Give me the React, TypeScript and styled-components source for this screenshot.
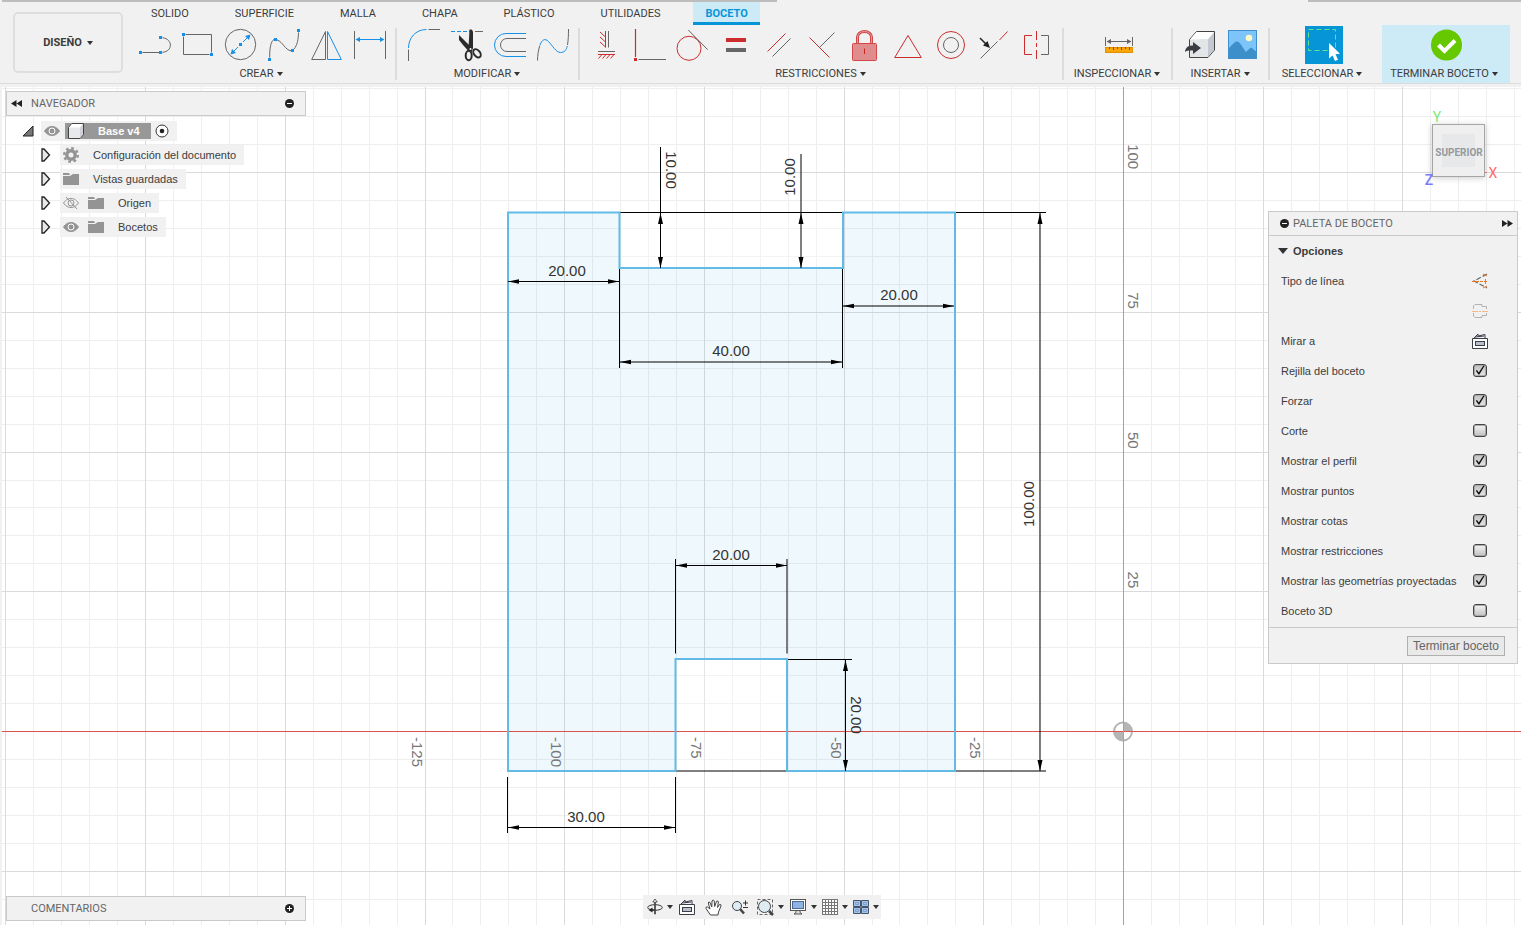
import React from "react";
import styled, { createGlobalStyle } from "styled-components";

const BLUE = "#168fe6";
const GRAY = "#666";
const RED = "#cc2c2c";
const INK = "#3c3c3c";
const PANEL = "#f1f1f1";
const LINE = "#cacaca";

const GlobalStyle = createGlobalStyle`
  *, *::before, *::after { box-sizing: border-box; }
  body {
    margin: 0;
    background: #fff;
    color: ${INK};
    font-family: "Liberation Sans", Arial, sans-serif;
    font-size: 11px;
  }
  button { font: inherit; color: inherit; margin: 0; padding: 0; border: 0; background: none; cursor: pointer; }
  svg { display: block; flex: none; }
`;

/* ---------- page ---------- */

const Page = styled.div`
  display: flex;
  flex-direction: column;
  min-height: 100vh;
`;

const Header = styled.header`
  background: ${PANEL};
  border-bottom: 1px solid #dcdcdc;
  font-family: Roboto, "Liberation Sans", sans-serif;
`;

const TopEdge = styled.div`
  display: flex;
  justify-content: space-between;
  height: 2px;
  padding-left: 2px;
`;

const EdgeBar = styled.div<{ $share: number }>`
  width: ${(p) => p.$share}%;
  background: #bdbdbd;
`;

const HeaderBody = styled.div`
  display: flex;
  align-items: flex-start;
  gap: 5px;
  padding: 0 11px 0 13px;
`;

const WorkspaceButton = styled.button`
  display: flex;
  flex: none;
  align-items: center;
  justify-content: center;
  gap: 5px;
  width: 110px;
  height: 61px;
  margin-top: 10px;
  border: 2px solid #dedede;
  border-radius: 5px;
  font-weight: 700;
`;

const Ribbon = styled.div`
  flex: 1;
  min-width: 0;
`;

const Tabs = styled.nav`
  display: flex;
  height: 23px;
`;

const Tab = styled.button<{ $active?: boolean }>`
  height: 23px;
  padding: 4px ${(p) => (p.$active ? 12 : 23)}px 0;
  margin-left: ${(p) => (p.$active ? 10 : 0)}px;
  border-bottom: 3px solid ${(p) => (p.$active ? "#0696d7" : "transparent")};
  background: ${(p) => (p.$active ? "#cdeaf7" : "none")};
  color: ${(p) => (p.$active ? "#0696d7" : INK)};
  font-weight: ${(p) => (p.$active ? 700 : 400)};
  line-height: 16px;
`;

const Groups = styled.div`
  display: flex;
  height: 58px;
`;

const Group = styled.section<{ $width?: number }>`
  display: flex;
  flex-direction: column;
  align-items: center;
  flex: none;
  min-width: ${(p) => p.$width ?? 0}px;
  padding: 0 3px 0 6px;
`;

const Separator = styled.div`
  flex: none;
  width: 2px;
  height: 52px;
  margin-top: 3px;
  background: #dcdcdc;
`;

const Tools = styled.div`
  display: flex;
  height: 40px;
`;

const ToolButton = styled.button`
  width: 43px;
  height: 40px;
`;

const GroupLabel = styled.button`
  display: flex;
  align-items: center;
  gap: 3px;
  height: 18px;
  padding-right: 4px;
  line-height: 18px;
  white-space: nowrap;
`;

const FinishGroup = styled.section`
  display: flex;
  flex-direction: column;
  align-items: center;
  flex: none;
  width: 128px;
  margin-left: 7px;
  background: #cdeaf7;
`;

const Caret = styled.span`
  width: 0;
  height: 0;
  border: 3px solid transparent;
  border-top: 4px solid #333;
  border-bottom: 0;
`;

/* ---------- workspace ---------- */

const Workspace = styled.main`
  position: relative;
  display: flex;
  flex: 1;
  flex-direction: column;
  border-top: 3px solid ${PANEL};
  border-left: 2px solid ${PANEL};
`;

const SketchCanvas = styled.svg`
  position: absolute;
  inset: 0;
  width: 100%;
  height: 100%;
`;

const Overlay = styled.div`
  position: relative;
  display: flex;
  flex: 1;
  flex-direction: column;
  justify-content: space-between;
  padding: 4px 3px 4px 4px;
`;

const UpperRow = styled.div`
  display: flex;
  align-items: flex-start;
  justify-content: space-between;
`;

const LowerRow = styled.div`
  display: grid;
  grid-template-columns: 1fr auto 1fr;
  align-items: end;
`;

const PanelBar = styled.div`
  display: flex;
  align-items: center;
  width: 300px;
  height: 25px;
  padding: 0 11px 0 4px;
  border: 1px solid ${LINE};
  background: ${PANEL};
  color: #666;
  font-family: Roboto, "Liberation Sans", sans-serif;
`;

const BarTitle = styled.h2`
  flex: 1;
  margin: 0;
  font-size: 11px;
  font-weight: 400;
`;

const BarIcon = styled.button`
  display: flex;
  align-items: center;
`;

const BarSlot = styled.div`
  flex: none;
  width: 20px;
`;

const Tree = styled.ul`
  display: flex;
  flex-direction: column;
  gap: 4px;
  margin: 5px 0 0;
  padding: 0 0 0 16px;
  list-style: none;
`;

const TreeItem = styled.li<{ $nested?: boolean }>`
  display: flex;
  align-items: center;
  height: 20px;
  padding-left: ${(p) => (p.$nested ? 19 : 0)}px;
`;

const Twisty = styled.button`
  display: flex;
  align-items: center;
  width: 19px;
  height: 20px;
`;

const NodeChip = styled.div`
  display: flex;
  align-items: center;
  height: 20px;
  padding: 0 8px 0 3px;
  background: ${PANEL};
`;

const NodeIcon = styled.span`
  width: 25px;
`;

const NodeText = styled.span`
  padding-left: 5px;
`;

const RootName = styled.span`
  display: flex;
  align-items: center;
  gap: 14px;
  height: 16px;
  margin-right: 4px;
  padding: 0 11px 0 3px;
  background: #989898;
  color: #fff;
  font-weight: 700;
`;

const RightColumn = styled.div`
  display: flex;
  flex-direction: column;
  align-items: flex-end;
  width: 250px;
`;

const ViewCube = styled.svg`
  width: 88px;
  height: 90px;
  margin: 15px 14px 15px 0;
`;

/* ---------- sketch palette ---------- */

const Palette = styled.aside`
  width: 250px;
  border: 1px solid ${LINE};
  background: ${PANEL};
`;

const PaletteHeader = styled.div`
  display: flex;
  align-items: center;
  gap: 4px;
  height: 24px;
  padding: 0 4px 0 11px;
  border-bottom: 1px solid ${LINE};
  color: #666;
  font-family: Roboto, "Liberation Sans", sans-serif;
`;

const SectionTitle = styled.button`
  display: flex;
  align-items: center;
  gap: 5px;
  height: 30px;
  padding-left: 9px;
  font-weight: 700;
`;

const BigCaret = styled.span`
  width: 0;
  height: 0;
  border: 5px solid transparent;
  border-top: 6px solid #333;
  border-bottom: 0;
`;

const Options = styled.div`
  padding-bottom: 1px;
`;

const OptionRow = styled.div`
  display: flex;
  align-items: center;
  justify-content: space-between;
  height: 30px;
  padding: 0 29px 0 12px;
`;

const Check = styled.input`
  display: grid;
  place-items: center;
  appearance: none;
  width: 14px;
  height: 13px;
  margin: 0 1px 2px 0;
  border: 1px solid #444;
  border-radius: 3px;
  background: linear-gradient(#f4f4f4, #c2c2c2);
  box-shadow: inset 0 0 0 1px #aaa;

  &:checked { background: linear-gradient(#c0c0c0, #e6e6e6); }

  &:checked::before {
    content: "";
    width: 10px;
    height: 10px;
    background: #111;
    clip-path: polygon(8% 58%, 20% 50%, 38% 76%, 84% 4%, 96% 8%, 44% 96%, 34% 96%);
  }
`;

const PaletteFooter = styled.div`
  display: flex;
  justify-content: flex-end;
  height: 36px;
  padding: 8px 12px 0 0;
  border-top: 1px solid ${LINE};
`;

const FooterButton = styled.button`
  height: 20px;
  padding: 0 5px;
  border: 1px solid #b0b0b0;
  background: #e9e9e9;
  color: #666;
  font-size: 12px;
`;

/* ---------- navigation bar ---------- */

const NavBar = styled.div`
  display: flex;
  align-items: center;
  height: 24px;
  margin-bottom: 2px;
  padding: 0 2px 0 4px;
  background: ${PANEL};
`;

const NavTool = styled.button<{ $gap?: number }>`
  display: flex;
  align-items: center;
  gap: 4px;
  margin-right: ${(p) => p.$gap ?? 0}px;
`;

/* ---------- ribbon icons ---------- */

const Dot = ({ x, y, c = BLUE }: { x: number; y: number; c?: string }) => (
  <rect x={x - 1.5} y={y - 1.5} width="3" height="3" fill={c} />
);

const ToolIcon = ({ children }: { children: React.ReactNode }) => (
  <svg width="43" height="40" viewBox="0 0 43 40" fill="none" stroke={GRAY} aria-hidden="true">
    {children}
  </svg>
);

const createTools: [string, React.ReactNode][] = [
  ["Línea", <>
    <path d="M8.5 27.5H25M28.5 12.7C39 14 39 26.500 28.500 27.300" />
    <g stroke="none"><Dot x={6.5} y={27.5} /><Dot x={26.5} y={27.5} /><Dot x={26.5} y={12.5} /></g>
  </>],
  ["Rectángulo", <>
    <path d="M8.500 9.500H34.500V27.500M32.500 29.500H6.500V11.500" />
    <g stroke="none"><Dot x={6.5} y={9.5} /><Dot x={34.5} y={29.5} /></g>
  </>],
  ["Círculo", <>
    <circle cx="20.500" cy="19.500" r="15.200" />
    <path d="M23 17L27 13M18 22L14 26" stroke={BLUE} />
    <path d="M30.500 9.500L25 11L29 15ZM10.500 29.500L12 24L16 28Z" fill={BLUE} stroke="none" />
    <g stroke="none"><Dot x={20.5} y={19.5} /></g>
  </>],
  ["Spline", <>
    <path d="M6.700 32.500C6.500 23 8 16 11 14.500M14 14.800C20 17 22 25 28 25.800M31 24C34.500 20 35.300 14 35.500 7.500" />
    <g stroke="none"><Dot x={6.5} y={34.5} /><Dot x={12.5} y={14.5} /><Dot x={29.5} y={25.5} /><Dot x={35.5} y={5.5} /></g>
  </>],
  ["Simetría", <>
    <path d="M5.700 34.500L19.500 6.500V34.500Z" />
    <path d="M21.500 6.500L35.300 34.500H21.500Z" stroke={BLUE} />
  </>],
  ["Cota", <>
    <path d="M5.500 6V34M36.500 6V34" />
    <path d="M9 14.500H33" stroke={BLUE} />
    <path d="M6.500 14.500L11 12V17ZM35.500 14.500L31 12V17Z" fill={BLUE} stroke="none" />
  </>],
];

const modifyTools: [string, React.ReactNode][] = [
  ["Empalme", <>
    <path d="M5.500 23C5.500 13 12.500 4.500 23.500 4.500" stroke={BLUE} />
    <path d="M25.500 4.500H37M5.500 24.500V36" />
  </>],
  ["Recortar", <>
    <path d="M5 6.500H24" stroke={BLUE} strokeDasharray="4 2" />
    <path d="M29 6.500H37" />
    <g stroke="none" fill="#2b2b2b">
      <path d="M13 10L26 23L25 28L21.500 25Q16 19 13 15Z" />
      <path d="M23.500 4.500H25.500Q27 5.500 27 7V23L25 28L22.500 23Z" />
    </g>
    <g stroke="#2b2b2b" strokeWidth="2">
      <ellipse cx="22.700" cy="30.500" rx="3" ry="4.700" />
      <ellipse cx="31" cy="28.300" rx="3" ry="4.700" transform="rotate(-38 31 28.300)" />
    </g>
    <circle cx="24.500" cy="24" r="1" fill="#fff" stroke="none" />
  </>],
  ["Desfase", <>
    <path d="M37 8.500H17A11.500 11.500 0 0 0 17 31.500H37" stroke={BLUE} />
    <path d="M37 13.500H18A6.500 6.500 0 0 0 18 26.500H37" />
  </>],
  ["Curvatura", <>
    <path d="M5.500 35.500C5.500 30 6.500 25 7.800 20.500M35.500 20C36.300 15 36.500 10 36.500 4" />
    <path d="M8 20C10 14.500 13 13 16.500 16.500C20.500 20.500 24 27.500 28.500 27.500C32.500 27.500 34.300 25 35.300 21" stroke={BLUE} />
  </>],
];

const constraintTools: [string, React.ReactNode][] = [
  ["Horizontal/Vertical", <>
    <g stroke={RED}>
      <path d="M19.500 6V22.500M19.500 12L14 7M19.500 17L14 12M19.500 22L14 17" />
      <path d="M12 29.500H29M16 29.500L12.500 33.500M20 29.500L16.500 33.500M24 29.500L20.500 33.500M28 29.500L24.500 33.500" />
    </g>
    <path d="M22.500 6V22.500M12 26.500H29" />
  </>],
  ["Coincidente", <>
    <path d="M6.500 4V32" stroke={RED} strokeWidth="1.200" />
    <path d="M9.500 34.500H37" />
    <g stroke="none"><Dot x={6.5} y={34.5} c={RED} /></g>
  </>],
  ["Tangente", <>
    <circle cx="17" cy="23.300" r="12" stroke={RED} />
    <path d="M16.300 5L35.700 24.700" />
  </>],
  ["Igual", <g stroke="none">
    <rect x="11" y="13" width="20" height="4" fill={RED} />
    <rect x="11" y="23" width="20" height="4" fill="#666" />
  </g>],
  ["Paralelo", <>
    <path d="M9.500 26.500L27.500 8.500" stroke={RED} />
    <path d="M14.500 31.500L32.500 13.500" />
  </>],
  ["Perpendicular", <>
    <path d="M8.500 12.500L28.500 32.500" stroke={RED} />
    <path d="M33.500 7.500L18.500 22.500" />
  </>],
  ["Fijar", <g stroke="#d04848">
    <path d="M13.500 18V12A7 5.500 0 0 1 27.500 12V18" stroke="#d04848" strokeWidth="3" />
    <path d="M13.500 18V12A7 5.500 0 0 1 27.500 12V18" stroke="#e59a9a" strokeWidth="1" />
    <rect x="8.500" y="18.500" width="24" height="17" rx="1" fill="#e08c8c" />
    <path d="M20.500 23.500V29" stroke="#c62828" />
  </g>],
  ["Punto medio", <path d="M21 10.500L34.300 32.500H7.700Z" stroke={RED} />],
  ["Concéntrico", <>
    <circle cx="21" cy="20" r="13.500" stroke={RED} />
    <circle cx="21" cy="20" r="7.500" />
  </>],
  ["Colineal", <>
    <path d="M7.500 33.500L24.500 16.500" />
    <path d="M26.500 15L34.500 6.500" stroke={RED} />
    <path d="M7 13L13 19" stroke="#222" strokeWidth="1.500" />
    <path d="M17 23L10 20.500L14.500 16Z" fill="#222" stroke="none" />
  </>],
  ["Simetría", <>
    <path d="M16 10.500H8.500V29.500H16" stroke={RED} />
    <path d="M20.500 6V34" stroke={RED} strokeDasharray="9 3 4 3" />
    <path d="M25 10.500H32.500V29.500H25" />
  </>],
];

const MeasureIcon = () => (
  <ToolIcon>
    <path d="M7.500 12V21M34.500 12V21M9 16.500H33" />
    <path d="M8.500 16.500L13 14V19ZM33.500 16.500L29 14V19Z" fill={GRAY} stroke="none" />
    <rect x="7.500" y="22.500" width="27" height="5" fill="#f9a60a" stroke="#e09000" />
    <path d="M11.500 22V24M15.500 22V25M19.500 22V24M23.500 22V25M27.500 22V24M31.500 22V25" stroke="#80560a" />
  </ToolIcon>
);

const InsertIcon = () => (
  <ToolIcon>
    <path d="M10.500 14.500L17.500 6.500H35.500V25L29 32.500H10.500Z" fill="#e3e5e9" stroke="#444" />
    <path d="M11 14.500L17.500 7H35L29 14Z" fill="#fff" stroke="none" />
    <path d="M29 14.500L35 7.500V25L29 32Z" fill="#c4c8d0" stroke="none" />
    <path d="M6 27C6.500 22.500 9 20.500 14 20.500V17L22 23L14 29V25.500C10 25.200 8 25.500 6 27Z" fill="#3a3d44" stroke="none" />
  </ToolIcon>
);

const ImageIcon = () => (
  <ToolIcon>
    <rect x="6.500" y="5.500" width="28" height="28" fill="#7cc4fa" stroke="#3f8fce" />
    <circle cx="27" cy="13" r="3.300" fill="#fdf9c4" stroke="none" />
    <path d="M7 23C11 19 13 16.500 15 16.500C18 16.500 20.500 22.500 24 27C27 24 29 22 30 23L34 26.500V33H7Z" fill="#3c8fc9" stroke="none" />
  </ToolIcon>
);

const SelectIcon = () => (
  <ToolIcon>
    <rect x="2" y="1" width="38" height="38" fill="#0696d7" stroke="none" />
    <rect x="5.500" y="4.500" width="27" height="21" stroke="#66e08c" strokeDasharray="5 3" />
    <path d="M26 18V33.500L29.500 30.500L32 36L35 34.700L32.500 29.300L37 28.700Z" fill="#fff" stroke="none" />
  </ToolIcon>
);

const FinishIcon = () => (
  <ToolIcon>
    <circle cx="21.500" cy="20" r="15.500" fill="#66c800" stroke="none" />
    <path d="M13.500 20L19.500 26L30 15.500" stroke="#fff" strokeWidth="4" />
  </ToolIcon>
);

/* ---------- small icons ---------- */

const RoundIcon = ({ plus }: { plus?: boolean }) => (
  <svg width="9" height="9" viewBox="0 0 9 9">
    <circle cx="4.500" cy="4.500" r="4.500" fill="#222" />
    <path d={plus ? "M2 4.500H7M4.500 2V7" : "M2 4.500H7"} stroke="#fff" />
  </svg>
);

const DoubleArrow = ({ flip }: { flip?: boolean }) => (
  <svg width="11" height="7" viewBox="0 0 11 7">
    <path d={flip ? "M0 0L5.500 3.500L0 7ZM5.500 0L11 3.500L5.500 7Z" : "M11 0L5.500 3.500L11 7ZM5.500 0L0 3.500L5.500 7Z"} fill="#222" />
  </svg>
);

const EyeIcon = ({ off }: { off?: boolean }) => (
  <svg width="16" height="14" viewBox="0 0 16 14">
    <path d="M.5 7C3 3.500 5.500 2.500 8 2.500S13 3.500 15.500 7C13 10.500 10.500 11.500 8 11.500S3 10.500 .5 7Z" fill={off ? "none" : "#949494"} stroke="#949494" />
    <circle cx="8" cy="7" r="3" fill={off ? "none" : "#949494"} stroke={off ? "#949494" : "#fff"} />
    {off && <path d="M3 1L14 13" stroke="#949494" />}
  </svg>
);

const FolderIcon = () => (
  <svg width="16" height="14" viewBox="0 0 16 14" fill="#949494">
    <path d="M0 1H6L7 3H0ZM0 4H7L10 2H16V13H0Z" />
  </svg>
);

const GearIcon = () => (
  <svg width="16" height="16" viewBox="0 0 16 16" fill="none" stroke="#949494">
    <circle cx="8" cy="8" r="4.200" strokeWidth="3.400" />
    <circle cx="8" cy="8" r="6.800" strokeWidth="2.400" strokeDasharray="2.670 2.670" />
  </svg>
);

const CubeIcon = () => (
  <svg width="16" height="16" viewBox="0 0 16 16">
    <path d="M.5 4.500L4 .5H15.500V11.500L12 15.500H.5Z" fill="#e8e9ec" stroke="#444" />
    <path d="M1 4.500L4 1H15L12 4.500Z" fill="#fff" />
    <path d="M12 4.500L15 1V11.500L12 15Z" fill="#cfd1d6" />
  </svg>
);

const ClosedTwisty = () => (
  <svg width="10" height="14" viewBox="0 0 10 14">
    <path d="M1 1H3L8.500 7L3 13H1Z" fill="#e8e8e8" stroke="#222" strokeWidth="1.300" />
  </svg>
);

const OpenTwisty = () => (
  <svg width="12" height="12" viewBox="0 0 12 12">
    <path d="M11 1V11H1Z" fill="#777" stroke="#222" />
  </svg>
);

const LookAtIcon = () => (
  <svg width="16" height="16" viewBox="0 0 16 16" fill="none" stroke="#3b3f4a">
    <path d="M.5 5.500H15.500V15.500H.5Z" fill="#fff" />
    <rect x="3.500" y="8.500" width="9" height="4" fill="#b9bfcb" />
    <path d="M2 5L6 1V3L13 1.500V5M3 4L12 3" />
  </svg>
);

const ConstructionIcon = () => (
  <svg width="16" height="16" viewBox="0 0 16 16" fill="none">
    <path d="M15 1L2 8L15 15" stroke="#666" strokeWidth="1.200" strokeDasharray="5 2" />
    <path d="M0 8.500H16" stroke="#ef7a25" strokeDasharray="3 1" />
    <path d="M11 1L15 3M11 15L15 13M13.500 6V11" stroke="#ef7a25" />
  </svg>
);

const CenterlineIcon = () => (
  <svg width="16" height="16" viewBox="0 0 16 16" fill="none">
    <path d="M1.500 6V3L3 1.500H10V3.500H14.500V6M1.500 10V13L3 14.500H10V12.500H14.500V10" stroke="#b3b3b3" />
    <path d="M0 8.500H16" stroke="#f4b98d" strokeDasharray="6 1 2 1" />
  </svg>
);

const OrbitIcon = () => (
  <svg width="16" height="18" viewBox="0 0 16 18" fill="none" stroke="#333">
    <ellipse cx="8" cy="9.500" rx="7.300" ry="2.800" />
    <path d="M7.500 16V4H5.800L8 1L10.200 4H8.500V16Z" fill="#fff" strokeWidth=".8" />
    <path d="M8 12H4" strokeWidth="1.500" />
    <path d="M5.500 9.500V14.500L1.500 12Z" fill="#222" stroke="none" />
  </svg>
);

const HandIcon = () => (
  <svg width="17" height="17" viewBox="0 0 17 17">
    <path d="M5.500 16L1 9.500Q.5 7.500 2.500 8L5 10L3.300 4Q3.500 2.300 5 3.500L6.800 8L7 1.800Q8.200 .3 9.200 1.800L9.700 7.500L11.500 2.300Q13 1.300 13.400 3L12.500 8.500L14.500 5.500Q16.300 4.900 16 7L13.500 13L13 16Z" fill="#fff" stroke="#444" />
  </svg>
);

const ZoomIcon = () => (
  <svg width="17" height="16" viewBox="0 0 17 16" fill="none" stroke="#444">
    <path d="M9 10L13 14.500" strokeWidth="2.500" />
    <circle cx="6" cy="7" r="4.500" fill="#dcecf2" />
    <path d="M12 4H17M14.500 1.500V6.500M12 8.500H17" stroke="#333" />
  </svg>
);

const ZoomWindowIcon = () => (
  <svg width="17" height="17" viewBox="0 0 17 17" fill="none" stroke="#444">
    <rect x=".5" y=".5" width="15" height="15" stroke="#666" strokeDasharray="3 2" />
    <path d="M12 12L16 16" strokeWidth="2.500" />
    <circle cx="7.500" cy="7.500" r="6" fill="#dcecf2" />
  </svg>
);

const DisplayIcon = () => (
  <svg width="17" height="16" viewBox="0 0 17 16" stroke="#555">
    <rect x=".5" y=".5" width="15" height="11" fill="#fff" />
    <rect x="2.500" y="2.500" width="11" height="7" fill="#8fb4e2" stroke="#456a9b" />
    <path d="M6 12V13.500L4 15H12L10 13.500V12" fill="#ddd" />
  </svg>
);

const GridIcon = () => (
  <svg width="16" height="16" viewBox="0 0 16 16" fill="#fff" stroke="#777">
    <rect x=".5" y=".5" width="15" height="15" />
    <path d="M3.500 0V16M6.500 0V16M9.500 0V16M12.500 0V16M0 3.500H16M0 6.500H16M0 9.500H16M0 12.500H16" />
  </svg>
);

const ViewportsIcon = () => (
  <svg width="16" height="14" viewBox="0 0 16 14" fill="#a6c4ea" stroke="#44546c">
    <path d="M.5 .5H7.500V6.500H.5ZM8.500 .5H15.500V6.500H8.500ZM.5 7.500H7.500V13.500H.5ZM8.500 7.500H15.500V13.500H8.500Z" />
    <path d="M2.500 2.500H5.500V4.500H2.500ZM10.500 2.500H13.500V4.500H10.500ZM2.500 9.500H5.500V11.500H2.500ZM10.500 9.500H13.500V11.500H10.500Z" stroke="#7f9fcc" />
  </svg>
);

/* ---------- sketch drawing ---------- */

const ORIGIN = { x: 1123, y: 731 };
const STEP = 27.94;

const gridIndexes = Array.from({ length: 141 }, (_, i) => i - 70).filter((k) => k !== 0);

const Grid = () => (
  <g>
    {[false, true].map((major) =>
      gridIndexes
        .filter((k) => (k % 5 === 0) === major)
        .map((k) => {
          const x = Math.round(ORIGIN.x + k * STEP) + 0.5;
          const y = Math.round(ORIGIN.y + k * STEP) + 0.5;
          return (
            <path key={k} d={`M${x} -2000V4000M-2000 ${y}H6000`} stroke={major ? "#dadada" : "#eeeeee"} />
          );
        })
    )}
  </g>
);

const HDim = ({ x1, x2, y }: { x1: number; x2: number; y: number }) => (
  <g>
    <path d={`M${x1} ${y}H${x2}`} stroke="#000" />
    <path d={`M${x1} ${y}l11 -2.300v4.600zM${x2} ${y}l-11 -2.300v4.600z`} fill="#000" />
  </g>
);

const VDim = ({ x, y1, y2, from = y1 }: { x: number; y1: number; y2: number; from?: number }) => (
  <g>
    <path d={`M${x} ${from}V${y2}`} stroke="#000" />
    <path d={`M${x} ${y1}l-2.500 11h5zM${x} ${y2}l-2.500 -11h5z`} fill="#000" />
  </g>
);

const DimText = styled.text`
  fill: #333;
  font-size: 15px;
  text-anchor: middle;
`;

const AxisText = styled.text<{ $end?: boolean }>`
  fill: #777;
  font-size: 15px;
  text-anchor: ${(p) => (p.$end ? "end" : "start")};
`;

const turned = (x: number, y: number, deg: number) => `translate(${x} ${y}) rotate(${deg})`;

const Sketch = () => (
  <SketchCanvas aria-label="Boceto">
    <g transform="translate(-2 -87)" fill="none">
      <Grid />
      <path
        d="M508 212.500H619.500V268H843V212.500H955V771H787V659H675.500V771H508Z"
        fill="#52b4ea"
        fillOpacity=".09"
      />
      <path d="M620.500 213H842V267H620.500ZM676.500 660H786V770H676.500Z" fill="#fff" fillOpacity=".3" />
      <path d="M-2000 731.500H6000" stroke="#d9534f" />
      <path d="M1123.500 -2000V4000" stroke="#4fdc4f" />
      <path
        d="M619.500 212.500H1046M955 771H1046M675.500 771H787M619.500 268V368M842.500 268V368M675.500 559V653.500M787 559V653.500M787 659.500H852M507.500 777V833M675.500 777V833"
        stroke="#000"
      />
      <path
        d="M508 212.500H619.500V268H843V212.500H955V771H787V659H675.500V771H508Z"
        stroke="#62bbe6"
        strokeWidth="2"
      />
      <HDim x1={508} x2={619} y={281.5} />
      <HDim x1={843} x2={954} y={306} />
      <HDim x1={620} x2={842} y={362} />
      <HDim x1={676} x2={787} y={565.5} />
      <HDim x1={508} x2={675} y={827.5} />
      <VDim x={660.5} y1={213} y2={268} from={147} />
      <VDim x={801} y1={213} y2={268} from={154} />
      <VDim x={1040} y1={213} y2={771} />
      <VDim x={845.5} y1={660} y2={771} />

      <DimText x="567" y="276">20.00</DimText>
      <DimText x="899" y="300">20.00</DimText>
      <DimText x="731" y="356">40.00</DimText>
      <DimText x="731" y="560">20.00</DimText>
      <DimText x="586" y="822">30.00</DimText>
      <DimText transform={turned(666, 170, 90)}>10.00</DimText>
      <DimText transform={turned(795, 177, -90)}>10.00</DimText>
      <DimText transform={turned(1034, 504, -90)}>100.00</DimText>
      <DimText transform={turned(851, 715, 90)}>20.00</DimText>

      {[100, 75, 50, 25].map((v) => (
        <AxisText key={v} $end transform={turned(1128, ORIGIN.y - 3 - (v / 5) * STEP, 90)}>{v}</AxisText>
      ))}
      {[-125, -100, -75, -50, -25].map((v) => (
        <AxisText key={v} transform={turned(ORIGIN.x - 13 + (v / 5) * STEP, 737, 90)}>{v}</AxisText>
      ))}

      <circle cx="1123" cy="731.500" r="9" stroke="#b5b5b5" strokeWidth="2" fill="#fff" />
      <path d="M1123 731.500V722.500A9 9 0 0 0 1114 731.500V731.500A9 9 0 0 0 1123 740.500Z" fill="#b5b5b5" fillOpacity="0" />
      <path d="M1123 731.500V722.500A9 9 0 0 1 1132 731.500ZM1123 731.500V740.500A9 9 0 0 1 1114 731.500Z" fill="#b5b5b5" />
      <path d="M1112 731.500H1134" stroke="#d9534f" />
      <path d="M1123.500 721V742" stroke="#4fdc4f" />
    </g>
  </SketchCanvas>
);

/* ---------- panels ---------- */

const ToolGroup = ({ label, tools }: { label: string; tools: [string, React.ReactNode][] }) => (
  <>
    <Group>
      <Tools>
        {tools.map(([name, art]) => (
          <ToolButton key={name} aria-label={name}><ToolIcon>{art}</ToolIcon></ToolButton>
        ))}
      </Tools>
      <GroupLabel>{label}<Caret /></GroupLabel>
    </Group>
    <Separator />
  </>
);

const tabs = ["SOLIDO", "SUPERFICIE", "MALLA", "CHAPA", "PLÁSTICO", "UTILIDADES", "BOCETO"];

const options: [string, boolean][] = [
  ["Rejilla del boceto", true],
  ["Forzar", true],
  ["Corte", false],
  ["Mostrar el perfil", true],
  ["Mostrar puntos", true],
  ["Mostrar cotas", true],
  ["Mostrar restricciones", false],
  ["Mostrar las geometrías proyectadas", true],
  ["Boceto 3D", false],
];

const nodes: { name: string; icons: React.ReactNode[] }[] = [
  { name: "Configuración del documento", icons: [<GearIcon key="g" />] },
  { name: "Vistas guardadas", icons: [<FolderIcon key="f" />] },
  { name: "Origen", icons: [<EyeIcon key="e" off />, <FolderIcon key="f" />] },
  { name: "Bocetos", icons: [<EyeIcon key="e" />, <FolderIcon key="f" />] },
];

const Navigator = () => (
  <section>
    <PanelBar>
      <BarSlot><BarIcon aria-label="Contraer"><DoubleArrow /></BarIcon></BarSlot>
      <BarTitle>NAVEGADOR</BarTitle>
      <BarIcon aria-label="Ocultar"><RoundIcon /></BarIcon>
    </PanelBar>
    <Tree>
      <TreeItem>
        <Twisty aria-label="Contraer"><OpenTwisty /></Twisty>
        <NodeChip>
          <EyeIcon />
          <NodeText><RootName><CubeIcon />Base v4</RootName></NodeText>
          <svg width="14" height="14" viewBox="0 0 14 14">
            <circle cx="7" cy="7" r="6" fill="#fff" stroke="#333" />
            <circle cx="7" cy="7" r="2.300" fill="#222" />
          </svg>
        </NodeChip>
      </TreeItem>
      {nodes.map((node) => (
        <TreeItem key={node.name} $nested>
          <Twisty aria-label="Expandir"><ClosedTwisty /></Twisty>
          <NodeChip>
            {node.icons.map((icon, i) => <NodeIcon key={i}>{icon}</NodeIcon>)}
            <NodeText>{node.name}</NodeText>
          </NodeChip>
        </TreeItem>
      ))}
    </Tree>
  </section>
);

const Cube = () => (
  <ViewCube viewBox="0 0 88 90" aria-label="Vista superior">
    <defs>
      <filter id="cubeShadow" x="-30%" y="-30%" width="160%" height="160%">
        <feDropShadow dx="0" dy="1" stdDeviation="3" floodOpacity=".2" />
      </filter>
    </defs>
    <rect x="16.500" y="18.500" width="52" height="52" fill="#efefef" stroke="#a5a5a5" filter="url(#cubeShadow)" />
    <rect x="26" y="28" width="33" height="33" fill="#e6e8ea" />
    <path d="M69 66.500H71" stroke="#ff6a6a" />
    <g fontFamily="Roboto, sans-serif" textAnchor="middle">
      <text x="43" y="50" fontSize="10" fontWeight="700" fill="#9599a0">SUPERIOR</text>
      <g fontSize="14">
        <text x="21" y="16" fill="#7be87b">Y</text>
        <text x="77" y="72" fill="#ff6a6a">X</text>
        <text x="13" y="79" fontWeight="500" fill="#7a7aff">Z</text>
      </g>
    </g>
  </ViewCube>
);

const SketchPalette = () => (
  <Palette>
    <PaletteHeader>
      <BarIcon aria-label="Ocultar"><RoundIcon /></BarIcon>
      <BarTitle>PALETA DE BOCETO</BarTitle>
      <BarIcon aria-label="Contraer"><DoubleArrow flip /></BarIcon>
    </PaletteHeader>
    <Options>
      <SectionTitle><BigCaret />Opciones</SectionTitle>
      <OptionRow>Tipo de línea<BarIcon aria-label="Construcción"><ConstructionIcon /></BarIcon></OptionRow>
      <OptionRow><span /><BarIcon aria-label="Línea de centro"><CenterlineIcon /></BarIcon></OptionRow>
      <OptionRow>Mirar a<BarIcon aria-label="Mirar a"><LookAtIcon /></BarIcon></OptionRow>
      {options.map(([label, on], i) => (
        <OptionRow key={label}>
          <label htmlFor={`opt-${i}`}>{label}</label>
          <Check id={`opt-${i}`} type="checkbox" defaultChecked={on} />
        </OptionRow>
      ))}
    </Options>
    <PaletteFooter><FooterButton>Terminar boceto</FooterButton></PaletteFooter>
  </Palette>
);

export default function App() {
  return (
    <Page>
      <GlobalStyle />
      <Header>
        <TopEdge><EdgeBar $share={51} /><EdgeBar $share={14} /></TopEdge>
        <HeaderBody>
          <WorkspaceButton>DISEÑO<Caret /></WorkspaceButton>
          <Ribbon>
            <Tabs>
              {tabs.map((t) => <Tab key={t} $active={t === "BOCETO"}>{t}</Tab>)}
            </Tabs>
            <Groups>
              <ToolGroup label="CREAR" tools={createTools} />
              <ToolGroup label="MODIFICAR" tools={modifyTools} />
              <ToolGroup label="RESTRICCIONES" tools={constraintTools} />
              <Group $width={107}>
                <ToolButton aria-label="Medir"><MeasureIcon /></ToolButton>
                <GroupLabel>INSPECCIONAR<Caret /></GroupLabel>
              </Group>
              <Separator />
              <Group>
                <Tools>
                  <ToolButton aria-label="Insertar"><InsertIcon /></ToolButton>
                  <ToolButton aria-label="Lienzo"><ImageIcon /></ToolButton>
                </Tools>
                <GroupLabel>INSERTAR<Caret /></GroupLabel>
              </Group>
              <Separator />
              <Group $width={105}>
                <ToolButton aria-label="Seleccionar"><SelectIcon /></ToolButton>
                <GroupLabel>SELECCIONAR<Caret /></GroupLabel>
              </Group>
              <FinishGroup>
                <ToolButton aria-label="Terminar"><FinishIcon /></ToolButton>
                <GroupLabel>TERMINAR BOCETO<Caret /></GroupLabel>
              </FinishGroup>
            </Groups>
          </Ribbon>
        </HeaderBody>
      </Header>
      <Workspace>
        <Sketch />
        <Overlay>
          <UpperRow>
            <Navigator />
            <RightColumn>
              <Cube />
              <SketchPalette />
            </RightColumn>
          </UpperRow>
          <LowerRow>
            <PanelBar>
              <BarSlot />
              <BarTitle>COMENTARIOS</BarTitle>
              <BarIcon aria-label="Añadir comentario"><RoundIcon plus /></BarIcon>
            </PanelBar>
            <NavBar>
              <NavTool aria-label="Órbita" $gap={6}><OrbitIcon /><Caret /></NavTool>
              <NavTool aria-label="Mirar a" $gap={10}><LookAtIcon /></NavTool>
              <NavTool aria-label="Encuadre" $gap={9}><HandIcon /></NavTool>
              <NavTool aria-label="Zoom" $gap={9}><ZoomIcon /></NavTool>
              <NavTool aria-label="Ventana de zoom" $gap={6}><ZoomWindowIcon /><Caret /></NavTool>
              <NavTool aria-label="Visualización" $gap={5}><DisplayIcon /><Caret /></NavTool>
              <NavTool aria-label="Rejilla" $gap={5}><GridIcon /><Caret /></NavTool>
              <NavTool aria-label="Ventanas gráficas"><ViewportsIcon /><Caret /></NavTool>
            </NavBar>
          </LowerRow>
        </Overlay>
      </Workspace>
    </Page>
  );
}
